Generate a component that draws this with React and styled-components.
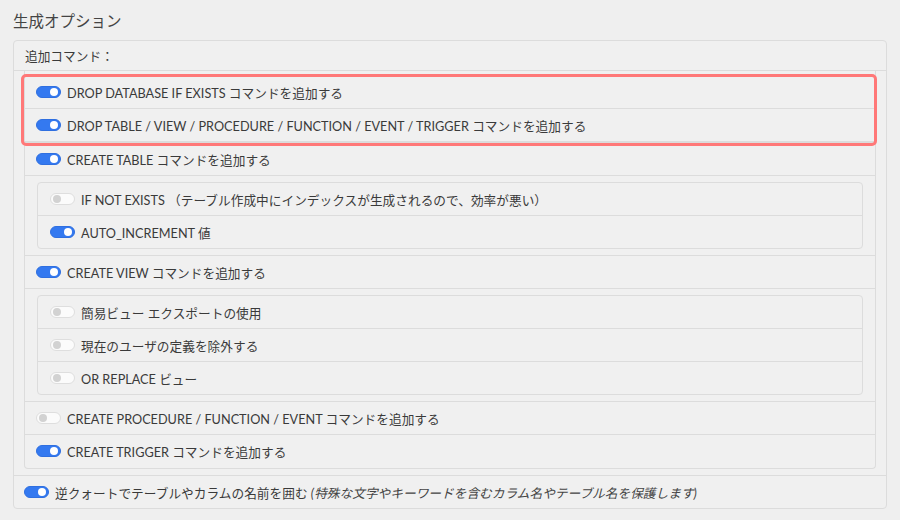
import React from 'react';
import styled, { createGlobalStyle } from 'styled-components';

const GlobalStyle = createGlobalStyle`
  html, body {
    margin: 0;
    background: #efefef;
  }
  body {
    font-family: Lato, "Noto Sans CJK JP", sans-serif;
    color: #3a3a3a;
  }
`;

const Page = styled.div`
  width: 900px;
  height: 520px;
  padding: 0 13px;
  box-sizing: border-box;
  background: #efefef;
`;

const Title = styled.h2`
  margin: 0;
  padding-top: 9px;
  height: 40px;
  box-sizing: border-box;
  font-size: 15.5px;
  font-weight: normal;
  color: #444;
`;

const Panel = styled.div`
  border: 1px solid #dcdcdc;
  border-radius: 4px;
  background: #f0f0f0;
`;

const PanelHeader = styled.div`
  height: 29px;
  display: flex;
  align-items: center;
  padding-left: 11px;
  border-bottom: 1px solid #dcdcdc;
  font-size: 12.7px;
`;

const PanelBody = styled.div`
  padding: 0 10px 6px;
`;

const List = styled.div`
  border: 1px solid #dcdcdc;
  border-top: none;
  border-radius: 0 0 4px 4px;
  padding: 5px 0 1px;
`;

const Highlight = styled.div`
  position: relative;
  border-bottom: 1px solid #dcdcdc;

  &::after {
    content: '';
    position: absolute;
    top: -2px;
    bottom: -5px;
    left: -4px;
    right: -2px;
    border: 3px solid #ff7878;
    border-radius: 5px;
    pointer-events: none;
  }
`;

const Row = styled.div`
  height: 32px;
  display: flex;
  align-items: center;
  gap: 6px;
  padding-left: ${p => (p.$nested ? 12 : p.$outer ? 10 : 11)}px;
  font-size: 12.7px;
  white-space: nowrap;
  & + & {
    border-top: 1px solid #dcdcdc;
  }
`;

const Section = styled.div`
  border-top: 1px solid #dcdcdc;
  &:first-child {
    border-top: none;
  }
`;

const SubGroup = styled.div`
  border-top: 1px solid #dcdcdc;
  padding: 6px 12px;
`;

const SubBox = styled.div`
  border: 1px solid #dcdcdc;
  border-radius: 4px;
`;

const Footer = styled.div`
  border-top: 1px solid #dcdcdc;
`;

const Hint = styled.em`
  font-style: italic;
  color: #444;
`;

const Toggle = styled.span`
  flex: none;
  width: 25px;
  height: 12px;
  border-radius: 7px;
  box-sizing: border-box;
  position: relative;
  background: ${p => (p.$on ? '#3479f0' : '#fbfbfb')};
  border: 1px solid ${p => (p.$on ? '#2f6fe0' : '#dedede')};

  &::after {
    content: '';
    position: absolute;
    top: 1px;
    width: 8px;
    height: 8px;
    border-radius: 50%;
    background: ${p => (p.$on ? '#fff' : '#d2d2d2')};
    ${p => (p.$on ? 'right: 2px;' : 'left: 2px;')}
  }
`;

const Option = ({ on, nested, outer, children }) => (
  <Row $nested={nested} $outer={outer}>
    <Toggle $on={on} />
    <span>{children}</span>
  </Row>
);

export default function App() {
  return (
    <Page>
      <GlobalStyle />
      <Title>生成オプション</Title>
      <Panel>
        <PanelHeader>追加コマンド：</PanelHeader>
        <PanelBody>
          <List>
            <Highlight>
              <Option on>DROP DATABASE IF EXISTS コマンドを追加する</Option>
              <Option on>DROP TABLE / VIEW / PROCEDURE / FUNCTION / EVENT / TRIGGER コマンドを追加する</Option>
            </Highlight>
            <Section>
              <Option on>CREATE TABLE コマンドを追加する</Option>
              <SubGroup>
                <SubBox>
                  <Option nested>IF NOT EXISTS （テーブル作成中にインデックスが生成されるので、効率が悪い）</Option>
                  <Option nested on>AUTO_INCREMENT 値</Option>
                </SubBox>
              </SubGroup>
            </Section>
            <Section>
              <Option on>CREATE VIEW コマンドを追加する</Option>
              <SubGroup>
                <SubBox>
                  <Option nested>簡易ビュー エクスポートの使用</Option>
                  <Option nested>現在のユーザの定義を除外する</Option>
                  <Option nested>OR REPLACE ビュー</Option>
                </SubBox>
              </SubGroup>
            </Section>
            <Section>
              <Option>CREATE PROCEDURE / FUNCTION / EVENT コマンドを追加する</Option>
              <Option on>CREATE TRIGGER コマンドを追加する</Option>
            </Section>
          </List>
        </PanelBody>
        <Footer>
          <Option on outer>
            逆クォートでテーブルやカラムの名前を囲む{' '}
            <Hint>(特殊な文字やキーワードを含むカラム名やテーブル名を保護します)</Hint>
          </Option>
        </Footer>
      </Panel>
    </Page>
  );
}
